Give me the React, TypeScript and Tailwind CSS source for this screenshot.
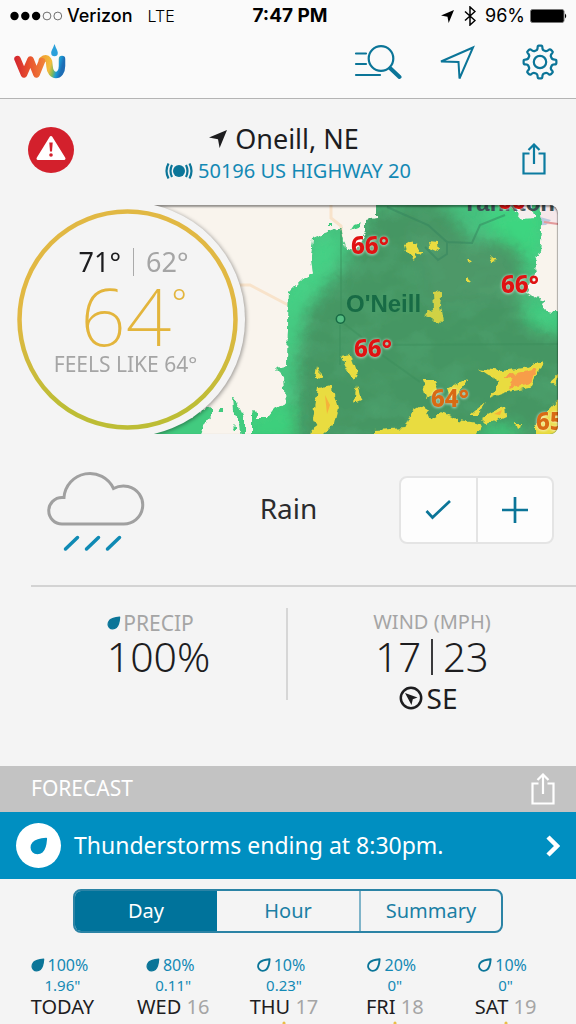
import React from "react";

const days = [
  { day: "TODAY", date: "", chance: "100%", amount: '1.96"', filled: true, sun: false },
  { day: "WED", date: "16", chance: "80%", amount: '0.11"', filled: true, sun: false },
  { day: "THU", date: "17", chance: "10%", amount: '0.23"', filled: false, sun: true },
  { day: "FRI", date: "18", chance: "20%", amount: '0"', filled: false, sun: true },
  { day: "SAT", date: "19", chance: "10%", amount: '0"', filled: false, sun: true },
];

const polar = (deg: number, r: number) => {
  const a = ((deg - 90) * Math.PI) / 180;
  return `${(18 + r * Math.cos(a)).toFixed(2)} ${(18 + r * Math.sin(a)).toFixed(2)}`;
};

const gearPath = () => {
  let d = `M${polar(-9, 15)}`;
  for (let i = 0; i < 8; i++) {
    const t = i * 45;
    d += `Q${polar(t - 8, 16.6)} ${polar(t - 4, 16.4)}L${polar(t + 4, 16.4)}Q${polar(t + 8, 16.6)} ${polar(t + 9, 15)}`;
    d += `Q${polar(t + 11, 12)} ${polar(t + 22.5, 12.2)}Q${polar(t + 34, 12)} ${polar(t + 36, 15)}`;
  }
  return d + "Z";
};

function Arrow({ className }: { className: string }) {
  return (
    <svg viewBox="0 0 18 18" className={className} fill="currentColor" aria-hidden="true">
      <path d="M18 0 10.600 18 9 9.200 0 7.600Z" />
    </svg>
  );
}

function Drop({ filled = true, className }: { filled?: boolean; className: string }) {
  return (
    <svg viewBox="0 0 14 14" className={className} aria-hidden="true">
      <path
        d="M12.600 1.300C8.500 1.600 4.400 2.600 2.500 4.600 0.700 6.700 0.700 9.700 2.400 11.400 4.200 13.200 7.300 13.100 9.300 11.500 11.500 9.700 12.300 5.600 12.600 1.300Z"
        fill={filled ? "currentColor" : "none"}
        stroke="currentColor"
        strokeWidth={filled ? 1.400 : 2}
        strokeLinejoin="round"
      />
    </svg>
  );
}

function ShareIcon() {
  return (
    <svg viewBox="0 0 24 32" className="w-6 h-8" fill="none" stroke="currentColor" strokeWidth="2.200" aria-hidden="true">
      <path d="M7.500 10.500H1.500V30.500H22.500V10.500H16.500M12 21V2M6.500 7 12 1.500 17.500 7" />
    </svg>
  );
}

function StatusBar() {
  return (
    <div className="grid grid-cols-[1fr_auto_1fr] items-center h-8 px-2 font-[Inter,sans-serif] text-lg text-black">
      <div className="flex items-center">
        <svg viewBox="0 0 54 10" className="w-[54px] h-[10px] ml-[2px] mr-[3px]" aria-hidden="true">
          <circle cx="4.500" cy="5" r="4.200" />
          <circle cx="15.300" cy="5" r="4.200" />
          <circle cx="26.100" cy="5" r="4.200" />
          <circle cx="37" cy="5" r="3.900" fill="none" stroke="#333" strokeWidth="0.700" />
          <circle cx="47.800" cy="5" r="3.900" fill="none" stroke="#333" strokeWidth="0.700" />
        </svg>
        <span className="font-medium">Verizon</span>
        <span className="ml-[15px] text-base font-light">LTE</span>
      </div>
      <span className="pl-1 font-bold text-[19px]">7:47 PM</span>
      <div className="flex items-center justify-end">
        <Arrow className="w-[13px] h-[13px]" />
        <svg viewBox="0 0 12 20" className="w-3 h-5 ml-[10px] mr-[9px]" fill="none" stroke="currentColor" strokeWidth="1.500" aria-hidden="true">
          <path d="M1 5.500 11 14.500 6 19V1L11 5.500 1 14.500" />
        </svg>
        <span>96%</span>
        <svg viewBox="0 0 38 14" className="w-[38px] h-[14px] ml-[5px]" aria-hidden="true">
          <rect x="0.500" y="0.500" width="33.500" height="13" rx="2" stroke="#777" />
          <path d="M35 4.500Q37.500 7 35 9.500Z" />
        </svg>
      </div>
    </div>
  );
}

function Logo() {
  return (
    <svg viewBox="0 0 52 36" className="w-[52px] h-9" fill="none" strokeWidth="6.500" strokeLinecap="round" strokeLinejoin="round" role="img" aria-label="Weather Underground">
      <defs>
        <linearGradient id="logoW" x1="0" x2="30" y1="0" y2="0" gradientUnits="userSpaceOnUse">
          <stop stopColor="#d2232f" />
          <stop offset="0.500" stopColor="#e8512d" />
          <stop offset="1" stopColor="#f0823a" />
        </linearGradient>
        <linearGradient id="logoU" x1="28" x2="49" y1="14" y2="20" gradientUnits="userSpaceOnUse">
          <stop stopColor="#f0a233" />
          <stop offset="0.450" stopColor="#f3bd3c" />
          <stop offset="0.650" stopColor="#7fb95b" />
          <stop offset="0.820" stopColor="#1b9ad6" />
          <stop offset="1" stopColor="#1d6db5" />
        </linearGradient>
      </defs>
      <path d="M28 16Q33 12 35 17.500L35.500 22C36 34 48 34 48 22V15" stroke="url(#logoU)" />
      <path d="M3.500 15 10 30.500 16.500 15.500 22.500 30.500 28 17" stroke="url(#logoW)" />
      <path d="M40.500 0C39 4.500 37.200 6.500 37.200 9A3.300 3.300 0 0 0 43.800 9C43.800 6.500 42 4.500 40.500 0Z" fill="#2aa0da" />
    </svg>
  );
}

function NavBar() {
  return (
    <nav className="flex items-center justify-between h-[67px] pl-[14px] pr-[18px] pb-[6px] border-b border-[#b4b4b4] text-[#0b7598]">
      <Logo />
      <div className="flex items-center">
        <button aria-label="Search" className="mr-[37px]">
          <svg viewBox="0 0 48 36" className="w-12 h-9" fill="none" stroke="currentColor" strokeWidth="2.200" strokeLinecap="round">
            <path d="M2 9.500H12M2 20H12M2 31H26" />
            <circle cx="27" cy="14.500" r="12.300" />
            <path d="M36.500 24.500 45.500 33" strokeWidth="4" />
          </svg>
        </button>
        <button aria-label="My location" className="mr-[47px]">
          <svg viewBox="0 0 36 36" className="w-9 h-9" fill="none" stroke="currentColor" strokeWidth="2">
            <path d="M34 3.500 2 17.500 19.500 18 20.500 34.500Z" />
          </svg>
        </button>
        <button aria-label="Settings">
          <svg viewBox="0 0 36 36" className="w-9 h-9" fill="none" stroke="currentColor" strokeWidth="2.200" strokeLinejoin="round">
            <path d={gearPath()} />
            <circle cx="18" cy="18" r="6.200" />
          </svg>
        </button>
      </div>
    </nav>
  );
}

function LocationHeader() {
  return (
    <header className="grid grid-cols-[46px_1fr_46px] items-start px-7 pt-6 h-[106px]">
      <button aria-label="Severe weather alert" className="mt-1">
        <svg viewBox="0 0 46 46" className="w-[46px] h-[46px]">
          <circle cx="23" cy="23" r="23" fill="#d3202c" />
          <path d="M23 10.500 36 31.500H10Z" fill="#fff" stroke="#fff" strokeWidth="3" strokeLinejoin="round" />
          <path d="M21.300 15.500H24.700L24 24.500H22Z" fill="#d3202c" />
          <circle cx="23" cy="28" r="1.800" fill="#d3202c" />
        </svg>
      </button>
      <div className="flex flex-col items-center">
        <h1 className="flex items-center pr-2 text-[27px] leading-8 text-[#1d1d1f]">
          <Arrow className="w-[18px] h-[18px] mr-2" />
          Oneill, NE
        </h1>
        <a href="#station" className="flex items-center text-xl leading-8 text-[#1389b4] whitespace-nowrap">
          <svg viewBox="0 0 28 18" className="w-7 h-[18px] mr-[5px] text-[#0b7598]" fill="none" stroke="currentColor" strokeWidth="2.200" aria-hidden="true">
            <circle cx="14" cy="9" r="6" fill="currentColor" stroke="none" />
            <path d="M7 3Q4 9 7 15M21 3Q24 9 21 15M3.500 1.500Q-0.500 9 3.500 16.500M24.500 1.500Q28.500 9 24.500 16.500" />
          </svg>
          50196 US HIGHWAY 20
        </a>
      </div>
      <button aria-label="Share" className="mt-5 mr-[2px] justify-self-end text-[#0b7ba0]">
        <ShareIcon />
      </button>
    </header>
  );
}

function RadarMap() {
  return (
    <div className="relative ml-32 mr-[18px] h-[229px] overflow-hidden rounded-r-lg bg-[#f9f4ed]">
      <svg viewBox="128 205 430 229" preserveAspectRatio="xMidYMid slice" className="w-full h-full" aria-hidden="true">
        <defs>
          <filter id="ragged">
            <feTurbulence type="fractalNoise" baseFrequency="0.150" numOctaves="2" seed="4" />
            <feDisplacementMap in="SourceGraphic" scale="7" xChannelSelector="R" yChannelSelector="G" />
            <feGaussianBlur stdDeviation="0.500" />
          </filter>
          <filter id="grain" x="0" y="0" width="1" height="1">
            <feTurbulence type="fractalNoise" baseFrequency="0.030 0.050" numOctaves="2" seed="9" />
            <feColorMatrix values="0 0 0 0 0.200  0 0 0 0 0.750  0 0 0 0 0.400  2.400 0 0 0 -1" />
          </filter>
          <filter id="soft">
            <feGaussianBlur stdDeviation="8" />
          </filter>
          <clipPath id="rain">
            <path d="M376 200V218L366 220 366 232 355 250 346 248 341 228 325 233 313 238 311 257 313 273 301 280 289 292 287 366 276 368 284 376 286 403 273 410 267 418 258 418 255 410 252 413V440H564V314L543 310 545 300 536 297 526 293 537 272 535 263 540 252 542 230 540 200Z" />
          </clipPath>
        </defs>
        <path d="M331 205V218L341 226V320M239 285H250L290 306" fill="none" stroke="#f8e3cb" strokeWidth="3" />
        <path d="M505 205H558V225L524 224Z" fill="#f6e8ea" />
        <path d="M520 224 540 217 551 220 546 225 528 226Z" fill="#bdc9de" />
        <path d="M544 222 558 224" stroke="#e39a9a" strokeWidth="2" />
        <g filter="url(#ragged)">
          <g clipPath="url(#rain)">
            <path d="M128 200H570V440H128Z" fill="#45c07d" />
            <g filter="url(#soft)">
              <path d="M375 205 440 200 470 240 520 240 524 290 530 325 575 330V445H296L296 360 308 310 345 265Z" fill="#459664" />
              <path d="M410 225 510 250 520 300 430 305Z" fill="#4d9868" />
              <path d="M320 235 340 235 335 265 298 315 290 400 283 400 283 290Z" fill="#44d185" />
              <path d="M490 205 545 205 540 270 520 250 490 232Z" fill="#3dd580" />
              <path d="M520 300 565 320V335L530 325Z" fill="#3fd181" />
              <path d="M245 400 295 405 295 445H245ZM480 428 515 425 520 440H480Z" fill="#3ecf7c" />
            </g>
            <rect x="240" y="200" width="330" height="240" filter="url(#grain)" opacity="0.120" />
          </g>
          <path d="M143 436 190 418 211 405 211 416 204 424 200 440H143ZM232 396 240 408 245 418V440H241L239 424 233 411Z" fill="#43cb7f" />
          <path d="M218 407H223V412H219ZM232 428 235 425V432H233ZM328 223H332V226H328ZM354 225 362 222 360 227 350 231Z" fill="#43cb7f" />
          <path d="M509 203 530 203 535 218 522 219Z" fill="#f6eeee" />
        </g>
        <path d="M387 207 428 225 447 242 472 243 480 225 505 215M425 247 438 260 447 254V242" fill="none" stroke="#33845d" strokeWidth="2" opacity="0.500" />
        <path d="M340 325V365M342 322 372 345 558 344M375 350 420 382M341 228V315" fill="none" stroke="#3a8d59" strokeWidth="2" opacity="0.400" />
        <g filter="url(#ragged)" fill="#e9dc41">
          <path d="M405 244 412 240 423 256 416 253 414 260 407 252ZM428 242 437 243 438 251 429 247ZM468 257 473 262 469 263ZM490 256 496 261 492 262ZM466 277 471 282 466 281Z" />
          <path d="M433 292 442 291 440 305 443 322 435 321 424 314 434 310Z" opacity="0.850" />
          <path d="M340 355 350 353 357 372 354 380 347 370ZM317 366 322 379 315 378ZM357 384 361 400 354 403ZM318 388 331 385 338 408 334 424 322 436 313 420Z" />
          <path d="M311 430 322 422V440H310ZM375 430 405 428 412 412 424 405 430 420 442 412 458 420 482 424 474 440H375ZM422 380 435 380 438 390 426 399ZM482 418 505 406 506 416 488 424ZM470 415 486 402 478 415Z" />
          <path d="M478 368 500 371 524 368 544 361 535 378 530 388 507 392 490 398 499 382ZM550 382 558 375 555 386ZM535 425 562 396V440H535ZM515 424 524 424 517 429ZM448 388 470 378 452 400Z" />
        </g>
        <path d="M505 376 525 371 538 368 530 383 509 388 512 380Z" fill="#f79d48" filter="url(#ragged)" />
        <path d="M494 414 502 410 500 415ZM325 395 330 405 327 414Z" fill="#f5b23a" />
        <circle cx="340.500" cy="319" r="4.200" fill="#55bd83" stroke="#176b45" strokeWidth="1.500" />
      </svg>
      <span className="absolute -top-[14px] right-[3px] font-['Liberation_Sans',Arial,sans-serif] font-bold text-2xl leading-6 text-[#3d5154]">Yankton</span>
      <span className="absolute top-[87px] left-[218px] font-['Liberation_Sans',Arial,sans-serif] font-bold text-2xl leading-6 text-[#176b45]">O'Neill</span>
      <div className="font-extrabold text-2xl leading-6 text-[#e01212] [text-shadow:0_0_3px_#ffffff99,0_1px_3px_#ffffff66]">
        <span className="absolute -top-[17px] left-[370px]">66°</span>
        <span className="absolute top-[28px] left-[223px]">66°</span>
        <span className="absolute top-[67px] left-[373px]">66°</span>
        <span className="absolute top-[131px] left-[226px]">66°</span>
        <span className="absolute top-[181px] left-[303px] text-[#d96a14]">64°</span>
        <span className="absolute top-[204px] left-[408px] text-[#d96a14]">65°</span>
      </div>
      <div className="absolute inset-0 rounded-r-lg shadow-[inset_0_2px_2px_#00000066,inset_-1px_0_1px_#00000033]" />
      <div className="absolute -left-[118px] -top-[3px] w-[235px] h-[235px] rounded-full bg-[#f4f4f4] shadow-[1px_1px_4px_#00000066]" />
    </div>
  );
}

function Gauge() {
  return (
    <div className="absolute left-[17px] top-1 w-[221px] h-[221px]">
      <svg viewBox="0 0 221 221" className="absolute inset-0" fill="none" aria-hidden="true">
        <defs>
          <linearGradient id="ring" x1="0" x2="0" y1="0" y2="1">
            <stop offset="0.500" stopColor="#e1b843" />
            <stop offset="0.900" stopColor="#bdbd35" />
          </linearGradient>
        </defs>
        <circle cx="110.500" cy="110.500" r="108" stroke="url(#ring)" strokeWidth="4.500" />
      </svg>
      <div className="relative flex flex-col items-center pt-[37px]">
        <div className="flex items-center pl-3 text-[27px] leading-8 text-[#1d1d1f]">
          <span>71°</span>
          <span className="w-px h-7 mx-3 bg-[#aaa]" />
          <span className="text-[#a5a5a5]">62°</span>
        </div>
        <div className="flex items-start pl-3 text-[80px] leading-[74px] font-extralight text-[#e3b53c]">
          <span>64</span>
          <span className="text-4xl leading-[50px] font-light">°</span>
        </div>
        <div className="pr-1 text-[21px] leading-6 text-[#a5a5a5]">FEELS LIKE 64°</div>
      </div>
    </div>
  );
}

function Conditions() {
  return (
    <section className="grid grid-cols-[1fr_auto_1fr] items-center h-[153px] ml-[31px] pl-4 pr-[22px] border-b-2 border-[#d3d3d3]">
      <svg viewBox="0 0 98 84" className="w-[98px] h-[84px]" fill="none" stroke="#a0a0a0" strokeWidth="3" role="img" aria-label="Rain cloud">
        <path d="M15 56H76A19 19 0 0 0 81 18.500Q73 17 66.500 20.500A26 26 0 0 0 17 29.500H15A13.250 13.250 0 0 0 15 56Z" />
        <path d="M18.500 81 30.500 69.500M39.500 81 51.500 69.500M60.500 81 72.500 69.500" stroke="#0f8ab4" strokeWidth="3.500" strokeLinecap="round" />
      </svg>
      <p className="pr-6 pb-1 text-[28px] leading-8 text-[#2b2b2d]">Rain</p>
      <div className="flex justify-self-end w-[155px] h-[68px] rounded-lg border-2 border-[#e4e4e4] bg-[#fdfdfd] text-[#0b7598]">
        <button aria-label="Confirm conditions" className="flex flex-1 items-center justify-center border-r-2 border-[#e4e4e4]">
          <svg viewBox="0 0 26 26" className="w-[26px] h-[26px]" fill="none" stroke="currentColor" strokeWidth="2.700">
            <path d="M1.500 14 7.500 20.500 25 4" />
          </svg>
        </button>
        <button aria-label="Report conditions" className="flex flex-1 items-center justify-center">
          <svg viewBox="0 0 26 26" className="w-[26px] h-[26px]" fill="none" stroke="currentColor" strokeWidth="2.700">
            <path d="M13 0V26M0 13H26" />
          </svg>
        </button>
      </div>
    </section>
  );
}

function Stats() {
  return (
    <section className="grid grid-cols-2 h-[179px] pt-[21px] text-[#1d1d1f]">
      <div className="flex flex-col items-center h-[92px] pl-[31px] border-r-2 border-[#d6d6d6]">
        <h2 className="flex items-center pr-4 text-[21px] leading-[30px] text-[#a5a5a5]">
          <Drop className="w-[14px] h-[14px] mr-[2px] text-[#0b7598]" />
          PRECIP
        </h2>
        <p className="text-[41px] leading-9 font-light">100%</p>
      </div>
      <div className="flex flex-col items-center">
        <h2 className="text-xl leading-7 text-[#a5a5a5]">WIND (MPH)</h2>
        <p className="flex items-center text-[40px] leading-[42px] font-light">
          17
          <span className="w-[2px] h-9 mx-[10px] bg-[#3a3a3c]" />
          23
        </p>
        <p className="flex items-center pr-2 text-[28px] leading-10">
          <svg viewBox="0 0 24 24" className="w-6 h-6 mr-1" aria-hidden="true">
            <circle cx="12" cy="12" r="10.200" fill="none" stroke="currentColor" strokeWidth="2.500" />
            <path d="M6 7 18.500 11.500 13.800 13.200 12.500 19Z" fill="currentColor" />
          </svg>
          SE
        </p>
      </div>
    </section>
  );
}

function Forecast() {
  return (
    <section>
      <div className="flex items-center justify-between h-[46px] pl-[31px] pr-[21px] bg-[#c3c3c3] text-white">
        <h2 className="text-[21px]">FORECAST</h2>
        <button aria-label="Share forecast">
          <ShareIcon />
        </button>
      </div>
      <a href="#storm" className="flex items-center h-[67px] px-4 bg-[#008fc1] text-white">
        <span className="flex items-center justify-center w-[45px] h-[45px] rounded-full bg-white text-[#008fc1]">
          <Drop className="w-[18px] h-[18px]" />
        </span>
        <span className="flex-1 ml-[13px] text-[23px] whitespace-nowrap">Thunderstorms ending at 8:30pm.</span>
        <svg viewBox="0 0 14 22" className="w-[14px] h-[22px]" fill="none" stroke="currentColor" strokeWidth="4.500" aria-hidden="true">
          <path d="M2 2 11 11 2 20" />
        </svg>
      </a>
      <div className="grid grid-cols-3 h-11 mt-[10px] mx-[73px] rounded-lg border-2 border-[#2b83a5] overflow-hidden text-xl text-[#1a7fa4]">
        <button className="bg-[#00739b] text-white">Day</button>
        <button>Hour</button>
        <button className="border-l-2 border-[#7fb4c9]">Summary</button>
      </div>
      <ul className="grid grid-cols-5 pl-[7px] pr-[15px] mt-[22px]">
        {days.map((d) => (
          <li key={d.day} className="flex flex-col items-center text-[#1389b4]">
            <span className="flex items-center pr-[6px] text-base leading-5">
              <Drop filled={d.filled} className="w-[14px] h-[14px] mr-[3px] text-[#0b7598]" />
              {d.chance}
            </span>
            <span className="text-[15px] leading-5">{d.amount}</span>
            <span className="text-xl leading-6 text-[#1d1d1f]">
              {d.day} {d.date && <span className="text-[#a5a5a5]">{d.date}</span>}
            </span>
            {d.sun && (
              <svg viewBox="0 0 48 48" className="w-12 h-12 mt-[2px]" fill="none" stroke="#e9bd45" strokeWidth="3" strokeLinecap="round" aria-hidden="true">
                <circle cx="24" cy="24" r="10" />
                <path d="M24 2V8M24 40V46M2 24H8M40 24H46" />
              </svg>
            )}
          </li>
        ))}
      </ul>
    </section>
  );
}

export default function App() {
  return (
    <div className="h-screen overflow-hidden bg-[#f4f4f4] font-['Noto_Sans','Open_Sans',sans-serif]">
      <div className="bg-[#fafafa]">
        <StatusBar />
        <NavBar />
      </div>
      <LocationHeader />
      <section className="relative">
        <RadarMap />
        <Gauge />
      </section>
      <Conditions />
      <Stats />
      <Forecast />
    </div>
  );
}
